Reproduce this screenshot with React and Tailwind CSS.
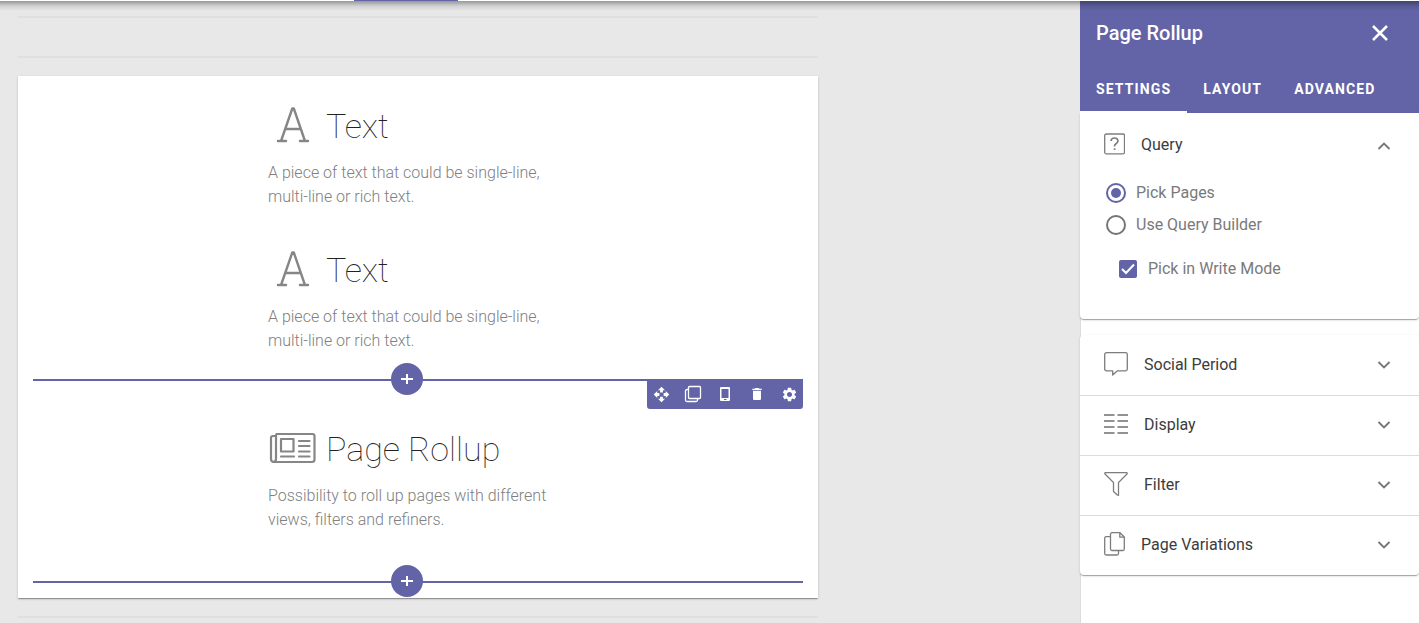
import { useState } from "react";
import { MdOpenWith, MdDelete, MdSettings } from "react-icons/md";

function LetterIcon() {
  return (
    <svg width="48" height="48" viewBox="0 2 48 48" fill="none" stroke="#868686" strokeWidth="2.4" strokeLinecap="round" strokeLinejoin="round" aria-hidden="true">
      <path d="M13.2 39.5 L24.300 7.500 h1.500 L36.800 39.5 M17.500 28 h14.800 M10 40 h8 M32 40 h8" />
    </svg>
  );
}

function NewsIcon() {
  return (
    <svg width="48" height="48" viewBox="0 2 48 48" fill="none" stroke="#868686" strokeWidth="2.2" strokeLinecap="round" strokeLinejoin="round" aria-hidden="true">
      <path d="M8.5 10 H44.500 a2 2 0 0 1 2 2 V35.500 a2.500 2.500 0 0 1 -2.500 2.500 H6 a3 3 0 0 1 -3 -3 V14 a2 2 0 0 1 2 -2 h2.500" />
      <path d="M8 11 V35 a3 3 0 0 1 -2.500 3" />
      <path d="M13 15 h12.500 v12.500 h-12.500 z M31 17 h10.500 M31 22 h10.500 M31 27.500 h10.500 M31 32.500 h10.500 M13 32.500 h13" />
    </svg>
  );
}

function Chevron({ up }) {
  return (
    <svg width="24" height="24" viewBox="0 0 24 24" fill="none" stroke="#757575" strokeWidth="1.8" aria-hidden="true">
      <path d={up ? "M6.500 16 L12 10.500 L17.500 16" : "M6.500 9 L12 14.500 L17.500 9"} />
    </svg>
  );
}

function Outline({ w, children }) {
  return (
    <svg width={w} height="26" viewBox={`0 1 ${w} 26`} fill="none" stroke="#7d7d7d" strokeWidth="1.3" strokeLinejoin="round" aria-hidden="true">
      {children}
    </svg>
  );
}

const icons = {
  query: (
    <Outline w={21}>
      <rect x="0.700" y="3" width="19.800" height="19.800" rx="1.500" />
      <path d="M7 10 Q7.200 7 10.500 7 T13.900 10 Q13.900 11.500 12 12.800 T10.600 15.500 M10.600 17.200 V19" strokeWidth="1.7" />
    </Outline>
  ),
  social: (
    <Outline w={24}>
      <path d="M2.500 1.700 H21.500 a1.800 1.800 0 0 1 1.800 1.800 V18 a1.800 1.800 0 0 1 -1.800 1.800 H13.500 L8.700 24 V19.800 H2.500 a1.800 1.800 0 0 1 -1.800 -1.800 V3.500 a1.800 1.800 0 0 1 1.800 -1.800 z" />
    </Outline>
  ),
  display: (
    <Outline w={24}>
      <path d="M0 4 h10.500 M13.500 4 H24 M0 10 h10.500 M13.500 10 H24 M0 16 h10.500 M13.500 16 H24 M0 22 h10.500 M13.500 22 H24" stroke="#929292" strokeWidth="2" />
    </Outline>
  ),
  filter: (
    <Outline w={24}>
      <path d="M1.200 1.700 H22.800 Q23.600 2 23 3 L14.500 11.500 V24.300 L13 23.800 L9.500 20.500 V11.500 L1 3 Q0.400 2 1.200 1.700 z" />
    </Outline>
  ),
  pages: (
    <Outline w={21}>
      <path d="M6.500 5.700 H2.200 a1.500 1.500 0 0 0 -1.500 1.500 V22.500 a1.500 1.500 0 0 0 1.500 1.500 H13 a1.500 1.500 0 0 0 1.500 -1.500 V19.500" />
      <path d="M8 1.700 H16 L20.300 6 V18 a1.500 1.500 0 0 1 -1.500 1.500 H8 a1.500 1.500 0 0 1 -1.500 -1.500 V3.200 a1.500 1.500 0 0 1 1.500 -1.500 z M15.800 1.700 V6.200 H20.300" />
    </Outline>
  ),
};

function Block({ icon, title, children }) {
  return (
    <section className="mx-auto w-[300px] pt-[25px] pb-[11px]">
      <div className="flex h-[52px] items-center gap-2.5">
        {icon}
        <h2 className="pb-0.5 text-[34px] leading-10 font-thin whitespace-nowrap text-[#222222]">{title}</h2>
      </div>
      <p className="mt-2 text-base leading-6 font-light text-[#808080]">{children}</p>
    </section>
  );
}

function InsertLine({ className, children }) {
  return (
    <div className={`relative mx-[15px] flex justify-center pr-[22px] ${className}`}>
      <div className="absolute inset-x-0 top-4 h-0.5 bg-[#6264a7]" />
      <button type="button" aria-label="Add block" className="relative flex size-8 items-center justify-center rounded-full bg-[#6264a7]">
        <svg width="12" height="12" viewBox="0 0 12 12" stroke="white" strokeWidth="2" aria-hidden="true">
          <path d="M0 6 H12 M6 1 V11" />
        </svg>
      </button>
      {children}
    </div>
  );
}

function Toolbar() {
  const tools = [
    ["Move", <MdOpenWith size={17} />],
    [
      "Duplicate",
      <svg width="18" height="18" viewBox="0 0 18 18" fill="none" stroke="white" strokeWidth="1.3" aria-hidden="true">
        <rect x="4.500" y="1.500" width="12" height="12" rx="1" />
        <path d="M4.500 4.500 H3 a1.500 1.500 0 0 0 -1.500 1.500 V15 a1.500 1.500 0 0 0 1.500 1.500 H12 a1.500 1.500 0 0 0 1.500 -1.500 V13.500" />
      </svg>,
    ],
    [
      "Mobile view",
      <svg width="16" height="16" viewBox="0 0 16 16" aria-hidden="true">
        <path fill="white" fillRule="evenodd" d="M4 1 H12 a1 1 0 0 1 1 1 V14 a1 1 0 0 1 -1 1 H4 a1 1 0 0 1 -1 -1 V2 a1 1 0 0 1 1 -1 z M4.500 3 V12 H11.500 V3 z M7 13 V14 H9.500 V13 z" />
      </svg>,
    ],
    ["Delete", <MdDelete size={16} />],
    ["Block settings", <MdSettings size={17} />],
  ];
  return (
    <div className="absolute top-4 right-0 flex gap-1 rounded-b-[3px] bg-[#6264a7] text-white">
      {tools.map(([name, icon]) => (
        <button key={name} type="button" aria-label={name} className="flex h-[30px] w-7 items-center justify-center">
          {icon}
        </button>
      ))}
    </div>
  );
}

function SectionHeader({ icon, label, open }) {
  return (
    <button type="button" aria-expanded={!!open} className="flex h-[59px] w-full items-center gap-4 pr-[23px] pb-0.5 pl-6 text-left text-base text-[#3c3c3c]">
      {icons[icon]}
      <span className="flex-1">{label}</span>
      <Chevron up={open} />
    </button>
  );
}

function Radio({ label, value, picked, onPick }) {
  return (
    <label className="flex h-8 items-center gap-2.5 text-base text-[#7a7a7a]">
      <input
        type="radio"
        name="source"
        checked={picked === value}
        onChange={() => onPick(value)}
        className="size-5 appearance-none rounded-full border-2 border-[#757575] bg-clip-content p-[3px] checked:border-[#6264a7] checked:bg-[#6264a7]"
      />
      {label}
    </label>
  );
}

const cardShadow = "shadow-[0_2px_1px_-1px_rgba(0,0,0,0.2),0_1px_1px_0_rgba(0,0,0,0.14),0_1px_3px_0_rgba(0,0,0,0.12)]";

const sections = [
  ["social", "Social Period"],
  ["display", "Display"],
  ["filter", "Filter"],
  ["pages", "Page Variations"],
];

export default function App() {
  const [source, setSource] = useState("pick");
  const [writeMode, setWriteMode] = useState(true);
  const [tab, setTab] = useState("Settings");

  return (
    <div className="flex h-screen flex-col overflow-hidden bg-[#e8e8e8] font-['Roboto',sans-serif]">
      <header className="relative z-10 flex h-px shrink-0 bg-white pl-[354px]">
        <div className="w-[104px] bg-[#6264a7]" />
        <div className="pointer-events-none absolute inset-x-0 top-full h-2.5 bg-linear-to-b from-black/35 via-black/10 to-transparent" />
      </header>

      <div className="flex min-h-0 flex-1">
        <main className="min-w-0 flex-1 overflow-hidden pt-[15px] pl-[18px]">
          <div className="max-w-[800px]">
            <div className="h-[42px] border-y-2 border-[#dfdfdf]" />
            <div className={`mt-[18px] bg-white pb-px ${cardShadow}`}>
              <Block icon={<LetterIcon />} title="Text">
                A piece of text that could be single-line, multi-line or rich text.
              </Block>
              <Block icon={<LetterIcon />} title="Text">
                A piece of text that could be single-line, multi-line or rich text.
              </Block>
              <InsertLine className="-mt-px mb-1">
                <Toolbar />
              </InsertLine>
              <Block icon={<NewsIcon />} title="Page Rollup">
                Possibility to roll up pages with different views, filters and refiners.
              </Block>
              <InsertLine className="mt-[22px]" />
            </div>
            <div className="mt-[18px] h-[42px] border-y-2 border-[#dfdfdf]" />
          </div>
        </main>

        <aside className="w-[339px] shrink-0 border-l border-[#dcdcdc] bg-white">
          <div className="-ml-px bg-[#6264a7] text-white">
            <div className="flex h-16 items-center justify-between pr-[31px] pl-4">
              <h1 className="text-xl font-medium">Page Rollup</h1>
              <button type="button" aria-label="Close">
                <svg width="16" height="16" viewBox="0 0 16 16" stroke="white" strokeWidth="2.500" aria-hidden="true">
                  <path d="M1 1 L15 15 M15 1 L1 15" />
                </svg>
              </button>
            </div>
            <nav className="flex h-12" role="tablist">
              {["Settings", "Layout", "Advanced"].map((name) => (
                <button
                  key={name}
                  type="button"
                  role="tab"
                  aria-selected={tab === name}
                  onClick={() => setTab(name)}
                  className="border-b-2 border-transparent px-4 pt-0.5 text-sm font-bold tracking-[0.08em] uppercase aria-selected:border-white"
                >
                  {name}
                </button>
              ))}
            </nav>
          </div>

          <div className={`-ml-px rounded-b bg-white pt-[3px] pb-[34px] ${cardShadow}`}>
            <SectionHeader icon="query" label="Query" open />
            <div className="pt-0.5 pl-[26px]">
              <Radio label="Pick Pages" value="pick" picked={source} onPick={setSource} />
              <Radio label="Use Query Builder" value="builder" picked={source} onPick={setSource} />
              <label className="mt-3 ml-[13px] flex h-8 items-center gap-[11px] text-base text-[#7a7a7a]">
                <span className="grid size-[18px]">
                  <input
                    type="checkbox"
                    checked={writeMode}
                    onChange={(e) => setWriteMode(e.target.checked)}
                    className="peer col-start-1 row-start-1 size-[18px] appearance-none rounded-[2px] border-2 border-[#757575] checked:border-[#6264a7] checked:bg-[#6264a7]"
                  />
                  <svg className="pointer-events-none invisible col-start-1 row-start-1 peer-checked:visible" width="18" height="18" viewBox="0 0 18 18" fill="none" stroke="white" strokeWidth="2" aria-hidden="true">
                    <path d="M3 9 L7 13 L15 4.500" />
                  </svg>
                </span>
                Pick in Write Mode
              </label>
            </div>
          </div>

          <div className={`mt-4 -ml-px rounded bg-white ${cardShadow}`}>
            {sections.map(([icon, label]) => (
              <div key={icon} className="border-t border-[#dcdcdc] first:border-transparent">
                <SectionHeader icon={icon} label={label} />
              </div>
            ))}
          </div>
        </aside>
      </div>
    </div>
  );
}
